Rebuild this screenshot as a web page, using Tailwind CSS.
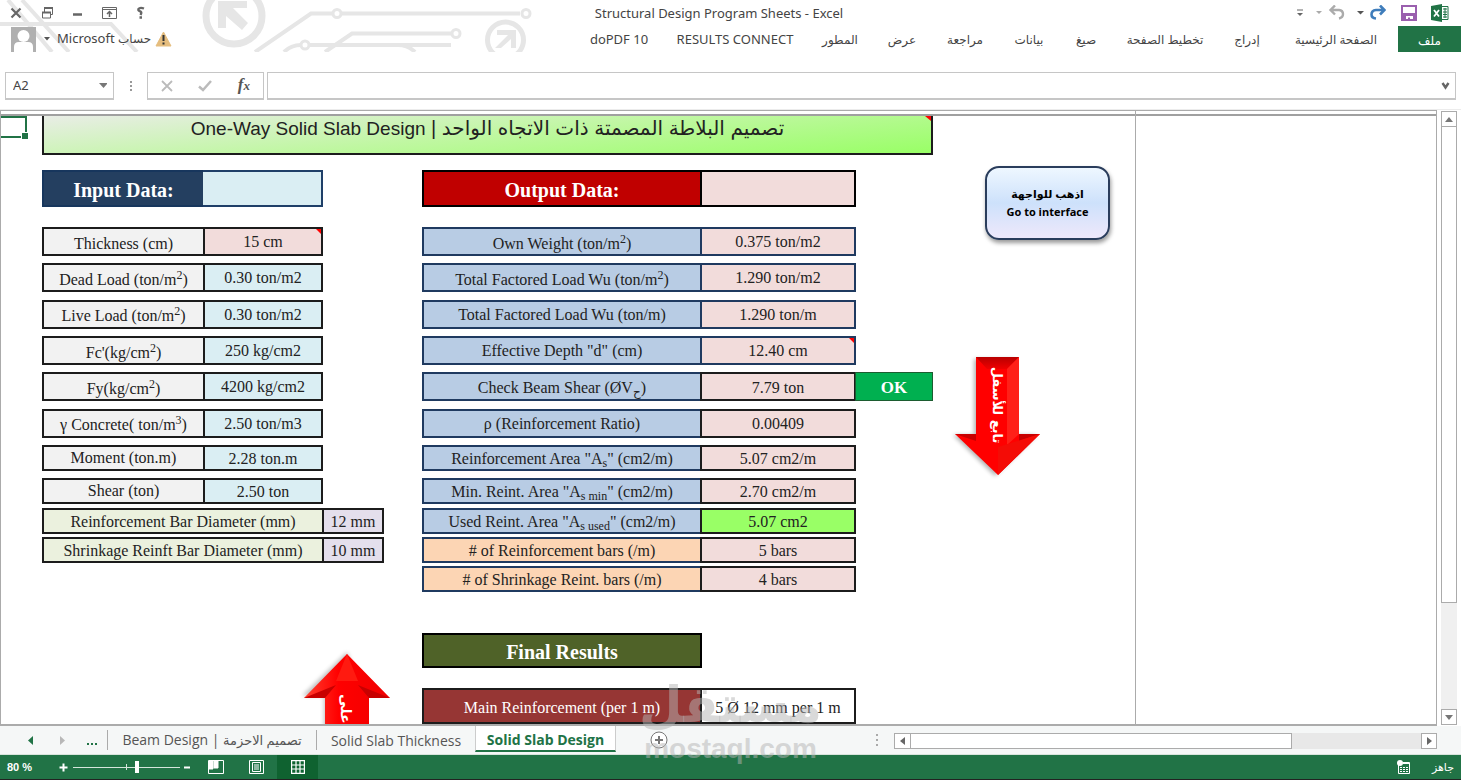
<!DOCTYPE html>
<html lang="ar">
<head>
<meta charset="utf-8">
<title>Structural Design Program Sheets - Excel</title>
<script src="https://cdn.jsdelivr.net/npm/@tailwindcss/browser@4"></script>
</head>
<body class="h-screen flex flex-col overflow-hidden bg-white text-[#444] font-['Noto_Sans','DejaVu_Sans',sans-serif] text-[13px]">

<header class="relative h-[52px] shrink-0">
  <svg class="absolute left-0 top-0" width="540" height="52" viewBox="0 0 540 52" fill="none" stroke="#e6e6e6" stroke-width="4" aria-hidden="true">
    <path d="M8 0 52 52M22 0 69 52M0 24H111L137 52"/>
    <circle cx="234" cy="16" r="28" stroke-width="7"/>
    <path d="M218 28V1H247V8H233L248 23 242 30 226 16V28Z" fill="#e6e6e6" stroke="none"/>
    <path d="M255 52 311 13.500H332M341 13.500H520M284 52Q291 45 301 45M310 45H451M325 52 352 33.500H451"/>
    <circle cx="337" cy="13.500" r="4" stroke-width="3" fill="#fff"/>
    <circle cx="305" cy="45" r="4" stroke-width="3" fill="#fff"/>
    <circle cx="526" cy="13.500" r="4" stroke-width="3" fill="#fff"/>
    <circle cx="456" cy="33.500" r="4" stroke-width="3" fill="#fff"/>
    <circle cx="505.500" cy="40" r="18" stroke-width="5"/>
    <path d="M497 30H516V48H511V39L501 48H495L508 35H497Z" fill="#e6e6e6" stroke="none"/>
    <path d="M398 45Q408 45 415 52"/>
  </svg>
  <div class="relative h-[26px] flex items-center justify-between">
    <div class="flex-1 flex items-center gap-[17px] pl-[9px]">
      <button aria-label="Close"><svg width="14" height="14" viewBox="0 0 14 14" fill="none" stroke="#666" stroke-width="2.200"><path d="M2.500 2.500 11.500 11.500M11.500 2.500 2.500 11.500"/></svg></button>
      <button aria-label="Restore"><svg width="14" height="14" viewBox="0 0 14 14" fill="none" stroke="#666"><path d="M4.500 6V2.500H12.500V8.500H10" /><path d="M4 2H13" stroke-width="2"/><path d="M2.500 6.500H10.500V12H2.500Z" fill="#fff"/><path d="M2 6.500H11" stroke-width="2"/></svg></button>
      <button aria-label="Minimize"><svg width="14" height="14" viewBox="0 0 14 14" stroke="#666" stroke-width="2.500"><path d="M2 8.500H11"/></svg></button>
      <button aria-label="Ribbon display options"><svg width="15" height="14" viewBox="0 0 15 14" fill="none" stroke="#666"><path d="M.5 1.500H14.500V12.500H.5ZM.5 3.500H14.500"/><path d="M7.500 11V6M5 8 7.500 5.500 10 8" stroke-width="1.500"/></svg></button>
      <button aria-label="Help"><svg width="14" height="14" viewBox="0 0 14 14" fill="none" stroke="#666" stroke-width="2.400"><path d="M10 2.500Q6 1 4.500 3 4 5 6.500 5.500 8 6.500 6.500 9M5.500 11.500H8"/></svg></button>
    </div>
    <h1 class="pr-[10px] -ml-[10px] pt-px">Structural Design Program Sheets - Excel</h1>
    <div class="flex-1 flex items-center justify-end pr-[12px]">
      <button aria-label="Customize" class="mr-[12px]"><svg width="8" height="8" viewBox="0 0 8 8"><path d="M1 1H7" stroke="#666"/><path d="M1 4H7L4 7Z" fill="#666"/></svg></button>
      <button aria-label="Undo list" class="mr-[6px]"><svg width="6" height="4"><path d="M0 0H6L3 3Z" fill="#aaa"/></svg></button>
      <button aria-label="Undo" class="mr-[12px]"><svg width="17" height="16" viewBox="0 0 17 16" fill="none" stroke="#ababab" stroke-width="2.400"><path d="M7 .5 2.500 5 7 9.500M3 5H11Q15 5.500 15 9 15 12.500 11 13.500"/></svg></button>
      <button aria-label="Redo list" class="mr-[6px]"><svg width="7" height="4"><path d="M0 0H7L3.500 3.500Z" fill="#555"/></svg></button>
      <button aria-label="Redo" class="mr-[15px]"><svg width="16" height="16" viewBox="0 0 16 16" fill="none" stroke="#3f7dbb" stroke-width="2.600"><path d="M10 .5 14.500 5 10 9.500M14 5H6Q1.500 5.500 1.500 9.500 1.500 13 6 13.500"/></svg></button>
      <button aria-label="Save" class="mr-[14px]"><svg width="16" height="16" viewBox="0 0 16 16" fill="none"><path d="M1 1H15V15H1Z" stroke="#9a5fae" stroke-width="2"/><path d="M2 8H14V15H12V11H5V15H2Z" fill="#9a5fae"/><path d="M7 12.500H9V15H7Z" fill="#9a5fae"/></svg></button>
      <svg width="18" height="18" viewBox="0 0 18 18" role="img" aria-label="Excel"><path d="M10 2.500H17V15.500H10Z" fill="#fff" stroke="#217346"/><path d="M12 5H16M12 8H16M12 10.500H16M12 13H16M14 4V14" stroke="#217346"/><path d="M0 2 11 0V18L0 16Z" fill="#217346"/><path d="M3 6 8 12.500M8 6 3 12.500" stroke="#fff" stroke-width="1.800"/></svg>
    </div>
  </div>
  <div class="relative h-[26px] flex items-center justify-between">
    <button class="flex items-center pl-[11px] h-full">
      <svg width="25" height="25" viewBox="0 0 25 25" aria-hidden="true"><path d="M0 0H25V25H0Z" fill="#b0b0b0"/><circle cx="12.500" cy="9" r="6" fill="#fff"/><path d="M3 25V20Q3 15 8 15H17Q22 15 22 20V25Z" fill="#fff"/></svg>
      <svg class="ml-[8px] mr-[7px]" width="6" height="4" aria-hidden="true"><path d="M0 0H6L3 3.500Z" fill="#555"/></svg>
      <span dir="ltr">Microsoft <bdi class="text-[12px]">حساب</bdi></span>
      <svg class="ml-1" width="17" height="16" viewBox="0 0 17 16" aria-hidden="true"><path d="M8.500 1 16 15H1Z" fill="#e5bd7e" stroke="#e5bd7e" stroke-linejoin="round"/><path d="M8.500 4V10M8.500 11.500V13.500" stroke="#333" stroke-width="2"/></svg>
    </button>
    <nav class="flex items-center h-full text-center whitespace-nowrap text-[12px] leading-[18px]">
      <a href="#" class="w-[86px] text-[13px]">doPDF 10</a>
      <a href="#" class="w-[146px] text-[13px]">RESULTS CONNECT</a>
      <a href="#" class="w-[64px] pt-[2px]">المطور</a>
      <a href="#" class="w-[60px] pt-[2px]">عرض</a>
      <a href="#" class="w-[66px] pt-[2px]">مراجعة</a>
      <a href="#" class="w-[62px] pt-[2px]">بيانات</a>
      <a href="#" class="w-[52px] pt-[2px]">صيغ</a>
      <a href="#" class="w-[106px] pt-[2px]">تخطيط الصفحة</a>
      <a href="#" class="w-[58px] pt-[2px]">إدراج</a>
      <a href="#" class="w-[120px] pt-[2px]">الصفحة الرئيسية</a>
      <a href="#" class="ml-[2px] w-[63px] h-full pt-[6px] bg-[#217346] text-white">ملف</a>
    </nav>
  </div>
</header>

<section class="mt-[20px] h-[28px] shrink-0 flex pl-[5px] pr-[5px]" aria-label="Formula bar">
  <label class="w-[109px] flex items-center border border-b-2 border-[#c6c6c6] pr-[6px]">
    <input aria-label="Name box" value="A2" class="w-full min-w-0 pl-[7px] pt-px outline-none text-[13px]">
    <svg width="9" height="6" aria-hidden="true"><path d="M0 0H9L4.500 5Z" fill="#777"/></svg>
  </label>
  <div class="w-[33px] flex flex-col items-center justify-center gap-[2px]" aria-hidden="true">
    <i class="size-[2px] bg-[#999]"></i><i class="size-[2px] bg-[#999]"></i><i class="size-[2px] bg-[#999]"></i>
  </div>
  <div class="w-[117px] flex items-center justify-between border border-b-2 border-[#c6c6c6] pl-[13px] pr-[13px]">
    <button aria-label="Cancel"><svg width="12" height="12" viewBox="0 0 12 12" stroke="#bbb" stroke-width="1.800"><path d="M1 1 11 11M11 1 1 11"/></svg></button>
    <button aria-label="Enter"><svg width="14" height="12" viewBox="0 0 14 12" fill="none" stroke="#bbb" stroke-width="2.500"><path d="M1 6.500 5 10 13 1"/></svg></button>
    <button aria-label="Insert function" class="font-['Liberation_Serif',serif] italic font-bold text-[17px] leading-4 text-[#555]">f<span class="text-[13px]">x</span></button>
  </div>
  <label class="ml-[3px] flex-1 flex items-center border border-b-2 border-[#c6c6c6] pr-[5px]">
    <input aria-label="Formula" class="flex-1 outline-none px-2">
    <svg width="9" height="8" viewBox="0 0 9 8" fill="none" stroke="#666" stroke-width="2.400" aria-hidden="true"><path d="M1.500 1 4.500 5.500 7.500 1"/></svg>
  </label>
</section>

<main class="mt-[9px] flex-1 min-h-0 flex border-t border-[#ececec]">
  <div class="relative flex-1 min-w-0 flex flex-col border-l border-r border-t border-b-2 border-[#ababab] overflow-hidden">
    <div class="h-[3px] shrink-0"></div>
    <div class="h-[2px] shrink-0 bg-[#a0a0a0]"></div>
    <div class="absolute left-0 top-[5px] w-[26px] h-[22px] border-2 border-[#217346] border-l-0"><i class="absolute -right-[3px] -bottom-[3px] size-[7px] bg-[#217346] border-t border-l border-white"></i></div>
    <div class="absolute inset-y-0 left-[1134px] w-px bg-[#ababab]"></div>

    <div class="flex pl-[41px] font-['Liberation_Serif',serif] text-[16px] leading-[22px] text-[#222]">
      <div class="w-[891px] shrink-0">
        <h2 dir="rtl" class="relative h-[39px] border-2 border-t-0 border-[#1c1c1c] bg-[linear-gradient(175deg,#e9ede6,#c0f7a2_50%,#99ff66)] text-center text-[20px] leading-6 font-['Liberation_Sans','DejaVu_Sans',sans-serif]">
          تصميم البلاطة المصمتة ذات الاتجاه الواحد | <bdi class="text-[19px]">One-Way Solid Slab Design</bdi>
          <svg class="absolute right-0 top-0" width="6" height="5" aria-hidden="true"><path d="M0 0H6V5Z" fill="#f00"/></svg>
        </h2>
        <div class="mt-[15px] flex gap-[38px]">
          <div class="w-[342px]">
            <table class="block">
              <thead class="block"><tr class="flex h-[37px]">
                <th class="w-[163px] flex items-center justify-center border-2 border-[#17365d] bg-[#243f60] pt-[2px] text-white text-[20px] font-bold">Input Data:</th>
                <td class="w-[120px] -ml-[2px] border-2 border-l-0 border-[#1f3f68] bg-[#daeef3]"></td>
              </tr></thead>
              <tbody class="block mt-[20px] text-center [&_td]:border-2 [&_th]:border-2 [&_td]:border-[#1c1c1c] [&_th]:border-[#1c1c1c] [&_td]:-ml-[2px] [&_th]:font-normal [&_sup]:text-[12px] [&_sup]:-top-[6px] [&_sup]:leading-none">
                <tr class="flex h-[29px]"><th class="w-[163px] bg-[#f2f2f2] pt-[4px]">Thickness (cm)</th><td class="relative w-[120px] bg-[#f2dcdb] pt-[2px]">15 cm<svg class="absolute right-0 top-0" width="5" height="5" aria-hidden="true"><path d="M0 0H5V5Z" fill="#f00"/></svg></td></tr>
                <tr class="flex h-[29px] mt-[7px]"><th class="w-[163px] bg-[#f2f2f2] pt-[4px]">Dead Load (ton/m<sup>2</sup>)</th><td class="w-[120px] bg-[#daeef3] pt-[2px]">0.30 ton/m2</td></tr>
                <tr class="flex h-[29px] mt-[8px]"><th class="w-[163px] bg-[#f2f2f2] pt-[3px]">Live Load (ton/m<sup>2</sup>)</th><td class="w-[120px] bg-[#daeef3] pt-[2px]">0.30 ton/m2</td></tr>
                <tr class="flex h-[29px] mt-[7px]"><th class="w-[163px] bg-[#f2f2f2] pt-[4px]">Fc'(kg/cm<sup>2</sup>)</th><td class="w-[120px] bg-[#daeef3] pt-[2px]">250 kg/cm2</td></tr>
                <tr class="flex h-[29px] mt-[7px]"><th class="w-[163px] bg-[#f2f2f2] pt-[4px]">Fy(kg/cm<sup>2</sup>)</th><td class="w-[120px] bg-[#daeef3] pt-[2px]">4200 kg/cm2</td></tr>
                <tr class="flex h-[29px] mt-[8px]"><th class="w-[163px] bg-[#f2f2f2] pt-[3px]">γ Concrete( ton/m<sup>3</sup>)</th><td class="w-[120px] bg-[#daeef3] pt-[2px]">2.50 ton/m3</td></tr>
                <tr class="flex h-[26px] mt-[7px]"><th class="w-[163px] bg-[#f2f2f2]">Moment (ton.m)</th><td class="w-[120px] bg-[#daeef3] pt-[1px]">2.28 ton.m</td></tr>
                <tr class="flex h-[26px] mt-[7px]"><th class="w-[163px] bg-[#f2f2f2]">Shear (ton)</th><td class="w-[120px] bg-[#daeef3] pt-[1px]">2.50 ton</td></tr>
                <tr class="flex h-[26px] mt-[4px]"><th class="w-[282px] bg-[#ebf1de] pt-[1px]">Reinforcement Bar Diameter (mm)</th><td class="w-[62px] bg-[#e4dfec] pt-[1px]">12 mm</td></tr>
                <tr class="flex h-[26px] mt-[3px]"><th class="w-[282px] bg-[#ebf1de] pt-[1px]">Shrinkage Reinft Bar Diameter (mm)</th><td class="w-[62px] bg-[#e4dfec] pt-[1px]">10 mm</td></tr>
              </tbody>
            </table>
            <svg class="mt-[88px] ml-[258px] overflow-visible" width="94" height="120" viewBox="0 0 94 120" role="img" aria-label="تابع للأعلى">
              <defs><linearGradient id="up" x1="0" x2="1"><stop offset="0" stop-color="#ff4030"/><stop offset=".4" stop-color="#ff0000"/><stop offset="1" stop-color="#f00000"/></linearGradient></defs>
              <path d="M46 3 1 47H23V130H64V47Z" fill="#000" opacity=".25" transform="translate(1 -2)" class="blur-[2px]"/>
              <path d="M47 3 90 47H69V130H25V47H4Z" fill="url(#up)"/>
              <path d="M47 3 58 30 36 30Z" fill="#ff1a10"/>
              <path d="M4 47 36 34 25 47ZM90 47 58 34 69 47Z" fill="#c80000"/>
              <text transform="translate(41 43) rotate(90)" direction="rtl" text-anchor="end" fill="#fff" font-size="14" font-weight="bold" font-family="DejaVu Sans, sans-serif">تابع للأعلى</text>
            </svg>
          </div>

          <div class="flex-1">
            <table class="block">
              <thead class="block"><tr class="flex h-[37px]">
                <th class="w-[280px] flex items-center justify-center border-2 border-black bg-[#c00000] pt-[2px] text-white text-[20px] font-bold">Output Data:</th>
                <td class="w-[156px] -ml-[2px] border-2 border-black bg-[#f2dcdb]"></td>
              </tr></thead>
              <tbody class="block mt-[20px] text-center [&_td]:border-2 [&_th]:border-2 [&_th]:border-[#1f3a60] [&_td]:-ml-[2px] [&_th]:font-normal [&_sup]:text-[12px] [&_sup]:-top-[6px] [&_sup]:leading-none [&_sub]:text-[12px] [&_sub]:leading-none">
                <tr class="flex h-[29px]"><th class="w-[280px] bg-[#b8cce4] pt-[4px]">Own Weight (ton/m<sup>2</sup>)</th><td class="w-[156px] border-[#1f3a60] bg-[#f2dcdb] pt-[2px]">0.375 ton/m2</td></tr>
                <tr class="flex h-[29px] mt-[7px]"><th class="w-[280px] bg-[#b8cce4] pt-[4px]">Total Factored Load Wu (ton/m<sup>2</sup>)</th><td class="w-[156px] border-[#1f3a60] bg-[#f2dcdb] pt-[2px]">1.290 ton/m2</td></tr>
                <tr class="flex h-[29px] mt-[8px]"><th class="w-[280px] bg-[#b8cce4] pt-[2px]">Total Factored Load Wu (ton/m)</th><td class="w-[156px] border-[#1f3a60] bg-[#f2dcdb] pt-[2px]">1.290 ton/m</td></tr>
                <tr class="flex h-[29px] mt-[7px]"><th class="w-[280px] bg-[#b8cce4] pt-[2px]">Effective Depth "d" (cm)</th><td class="relative w-[156px] border-[#1f3a60] bg-[#f2dcdb] pt-[2px]">12.40 cm<svg class="absolute right-0 top-0" width="5" height="5" aria-hidden="true"><path d="M0 0H5V5Z" fill="#f00"/></svg></td></tr>
                <tr class="flex h-[29px] mt-[7px]"><th class="w-[280px] bg-[#b8cce4] pt-[3px]">Check Beam Shear (ØV<sub>ح</sub>)</th><td class="w-[156px] border-[#1c1c1c] bg-[#f2dcdb] pt-[3px]">7.79 ton</td><td class="w-[78px] ml-[-1px]! border-1! border-[#1c5c30] bg-[#00b050] text-white font-bold text-[17px] pt-[4px]">OK</td></tr>
                <tr class="flex h-[29px] mt-[8px]"><th class="w-[280px] bg-[#b8cce4] pt-[2px]">ρ (Reinforcement Ratio)</th><td class="w-[156px] border-[#1c1c1c] bg-[#f2dcdb] pt-[2px]">0.00409</td></tr>
                <tr class="flex h-[26px] mt-[7px]"><th class="w-[280px] bg-[#b8cce4] pt-[1px]">Reinforcement Area "A<sub>s</sub>" (cm2/m)</th><td class="w-[156px] border-[#1c1c1c] bg-[#f2dcdb] pt-[1px]">5.07 cm2/m</td></tr>
                <tr class="flex h-[26px] mt-[7px]"><th class="w-[280px] bg-[#b8cce4] pt-[1px]">Min. Reint. Area "A<sub>s min</sub>" (cm2/m)</th><td class="w-[156px] border-[#1c1c1c] bg-[#f2dcdb] pt-[1px]">2.70 cm2/m</td></tr>
                <tr class="flex h-[26px] mt-[4px]"><th class="w-[280px] bg-[#b8cce4] pt-[1px]">Used Reint. Area "A<sub>s used</sub>" (cm2/m)</th><td class="w-[156px] border-[#1c1c1c] bg-[#99ff66] pt-[1px]">5.07 cm2</td></tr>
                <tr class="flex h-[26px] mt-[3px]"><th class="w-[280px] bg-[#fcd5b4] pt-[1px]"># of Reinforcement bars (/m)</th><td class="w-[156px] border-[#1c1c1c] bg-[#f2dcdb] pt-[1px]">5 bars</td></tr>
                <tr class="flex h-[26px] mt-[3px]"><th class="w-[280px] bg-[#fcd5b4] pt-[1px]"># of Shrinkage Reint. bars (/m)</th><td class="w-[156px] border-[#1c1c1c] bg-[#f2dcdb] pt-[1px]">4 bars</td></tr>
              </tbody>
            </table>
            <table class="block mt-[41px]">
              <thead class="block"><tr class="flex h-[35px]"><th class="w-[280px] flex items-center justify-center border-2 border-black bg-[#4f6228] pt-[2px] text-white text-[20px] font-bold">Final Results</th></tr></thead>
              <tbody class="block mt-[20px]"><tr class="flex h-[36px] text-center">
                <th class="w-[280px] border-2 border-[#1c1c1c] bg-[#963634] text-white font-normal pt-[7px]">Main Reinforcement (per 1 m)</th>
                <td class="w-[156px] -ml-[2px] border-2 border-[#1c1c1c] pt-[7px]">5 Ø 12 mm per 1 m</td>
              </tr></tbody>
            </table>
          </div>
        </div>
      </div>

      <div class="flex flex-col items-start pt-[50px]">
        <button class="ml-[52px] w-[125px] h-[74px] rounded-[14px] border-2 border-[#2a3d5c] bg-linear-to-b from-[#eef7ff] via-[#cde1fb] to-[#eee8fb] shadow-[1px_3px_4px_rgba(0,0,0,0.4)] font-['Open_Sans','DejaVu_Sans',sans-serif] font-bold text-[11px] leading-[18px] text-black whitespace-nowrap">اذهب للواجهة<br>Go to interface</button>
        <svg class="mt-[115px] ml-[18px] overflow-visible" width="94" height="126" viewBox="0 0 94 126" role="img" aria-label="تابع للأسفل">
          <defs><linearGradient id="cap" x1="0" x2="0" y1="0" y2="1"><stop offset="0" stop-color="#b80000"/><stop offset="1" stop-color="#f00000"/></linearGradient></defs>
          <path d="M23 4H63V80H86L44 121 2 80H23Z" fill="#000" opacity=".3" class="blur-[2px]"/>
          <path d="M25 2H68V79H89L47 120 4 79H25Z" fill="#ff0000"/>
          <path d="M25 2H68L56 14H36Z" fill="url(#cap)"/>
          <path d="M68 2V79L56 90V14Z" fill="#ff2018"/>
          <path d="M4 79H25V86ZM68 79H89L68 86Z" fill="#c80000"/>
          <path d="M47 92 47 120 89 79Z" fill="#f40c06"/>
          <text transform="translate(42 50) rotate(90)" direction="rtl" text-anchor="middle" fill="#fff" font-size="13" font-weight="bold" font-family="DejaVu Sans, sans-serif">تابع للأسفل</text>
        </svg>
      </div>
    </div>
  </div>

  <div class="w-[24px] shrink-0 flex flex-col items-center bg-white pt-[1px]">
    <button aria-label="Scroll up" class="w-[16px] h-[16px] shrink-0 flex items-center justify-center border border-[#ababab]"><svg width="8" height="5"><path d="M0 5H8L4 0Z" fill="#777"/></svg></button>
    <div class="w-[16px] flex-1 bg-[#f0f0f0]"><div class="-mt-px h-[82%] border border-[#ababab] bg-white"></div></div>
    <button aria-label="Scroll down" class="w-[16px] h-[16px] mb-[1px] shrink-0 flex items-center justify-center border border-[#ababab]"><svg width="8" height="5"><path d="M0 0H8L4 5Z" fill="#777"/></svg></button>
  </div>
</main>

<nav class="h-[28px] shrink-0 flex items-stretch bg-[#f5f7f7] text-[14px] text-[#555] whitespace-nowrap" aria-label="Sheets">
  <div class="w-[108px] my-[4px] flex items-center border-r border-[#ababab] pl-[28px]">
    <button aria-label="Previous sheet"><svg width="6" height="9"><path d="M5 0V9L0 4.500Z" fill="#217346"/></svg></button>
    <button aria-label="Next sheet" class="ml-[26px]"><svg width="6" height="9"><path d="M0 0V9L5 4.500Z" fill="#b8b8b8"/></svg></button>
    <button aria-label="More sheets" class="ml-[21px] flex gap-[2px] pt-[7px]"><i class="size-[2px] bg-[#217346]"></i><i class="size-[2px] bg-[#217346]"></i><i class="size-[2px] bg-[#217346]"></i></button>
  </div>
  <a href="#" class="w-[209px] my-[4px] flex items-center justify-center border-r border-[#ababab] font-['Open_Sans','DejaVu_Sans',sans-serif]"><span dir="ltr">Beam Design | <bdi class="text-[13px]">تصميم الاحزمة</bdi></span></a>
  <a href="#" class="w-[158px] flex items-center justify-center font-['Open_Sans',sans-serif]">Solid Slab Thickness</a>
  <a href="#" aria-current="page" class="w-[141px] h-[26px] pt-[2px] flex items-center justify-center border-b-2 border-x border-b-[#217346] border-x-[#ccc] bg-white text-[#217346] font-bold text-[14px] font-['Open_Sans',sans-serif]">Solid Slab Design</a>
  <button aria-label="New sheet" class="ml-[34px]"><svg width="18" height="18" viewBox="0 0 18 18" fill="none" stroke="#777"><circle cx="9" cy="9" r="8" fill="#fff"/><path d="M9 5V13M5 9H13" stroke-width="2"/></svg></button>
  <div class="flex-1"></div>
  <div class="flex flex-col justify-center gap-[3px] mr-[16px]" aria-hidden="true"><i class="size-[2px] bg-[#aaa]"></i><i class="size-[2px] bg-[#aaa]"></i><i class="size-[2px] bg-[#aaa]"></i></div>
  <div class="w-[543px] h-[16px] mt-[7px] mr-[24px] flex bg-[#e8e8e8]">
    <button aria-label="Scroll left" class="w-[17px] bg-white border border-[#ababab] flex items-center justify-center"><svg width="5" height="8"><path d="M5 0V8L0 4Z" fill="#666"/></svg></button>
    <div class="-ml-px w-[382px] bg-white border border-[#ababab]"></div>
    <button aria-label="Scroll right" class="ml-auto w-[16px] bg-white border border-[#ababab] flex items-center justify-center"><svg width="5" height="8"><path d="M0 0V8L5 4Z" fill="#666"/></svg></button>
  </div>
</nav>

<footer class="h-[26px] shrink-0 flex items-center bg-[#217346] border-t border-t-[#d8e4dc] border-b border-b-[#222] text-white text-[11px] whitespace-nowrap">
  <span class="w-[59px] pl-[7px] font-['Liberation_Sans',sans-serif] font-bold">80 %</span>
  <button aria-label="Zoom in" class="w-[10px]"><svg width="9" height="9" stroke="#fff" stroke-width="2"><path d="M4.500 .5V8.500M.5 4.500H8.500"/></svg></button>
  <div class="relative ml-[4px] w-[107px] h-full flex items-center">
    <input type="range" dir="rtl" min="0" max="100" value="40" aria-label="Zoom" class="appearance-none w-full h-px bg-[#d5e5db] [&::-webkit-slider-thumb]:appearance-none [&::-webkit-slider-thumb]:w-[4px] [&::-webkit-slider-thumb]:h-[12px] [&::-webkit-slider-thumb]:bg-white">
    <i class="absolute left-[53px] top-[9px] w-px h-[6px] bg-[#d5e5db]"></i>
  </div>
  <button aria-label="Zoom out" class="ml-[4px] w-[24px]"><svg width="7" height="9" stroke="#fff" stroke-width="2"><path d="M0 4.500H6"/></svg></button>
  <button aria-label="Page break preview"><svg width="16" height="14" viewBox="0 0 16 14" fill="none" stroke="#fff"><path d="M.5 .5H15.500V13.500H.5Z"/><path d="M1 1H5V9H1ZM6 1H10V8H6Z" fill="#fff"/></svg></button>
  <button aria-label="Page layout" class="ml-[25px]"><svg width="15" height="14" viewBox="0 0 15 14" fill="none" stroke="#fff"><path d="M.5 .5H14.500V13.500H.5ZM3.500 2.500H11.500V11.500H3.500ZM5 5H10M5 7H10M5 9H10"/></svg></button>
  <button aria-label="Normal view" class="ml-[13px] w-[41px] h-full flex items-center justify-center bg-[#0f6230]"><svg width="14" height="14" viewBox="0 0 14 14" fill="none" stroke="#fff" stroke-width="1.200"><path d="M.6 .6H13.400V13.400H.6ZM5 .6V13.400M9 .6V13.400M.6 5H13.400M.6 9H13.400"/></svg></button>
  <div class="flex-1"></div>
  <button aria-label="Record macro" class="mr-[22px]"><svg width="13" height="14" viewBox="0 0 13 14" fill="none" stroke="#fff"><path d="M1.500 5V13.500H12.500V2.500H6"/><path d="M6 3H12" stroke-width="2"/><path d="M3 7.500H11M3 9.500H11M3 11.500H11" stroke-dasharray="2 1"/><circle cx="3" cy="3" r="3" fill="#fff" stroke="none"/></svg></button>
  <span class="pr-[7px]">جاهز</span>
</footer>

<div class="absolute left-[642px] top-[676px] w-[177px] flex flex-col items-center font-bold text-[#b4b4b4]/50 pointer-events-none whitespace-nowrap">
  <div class="h-[58px] text-[50px] leading-[58px] font-['DejaVu_Sans',sans-serif]">مستقل</div>
  <div class="text-[28px] leading-[30px] font-['Liberation_Sans',sans-serif]">mostaql.com</div>
</div>
</body>
</html>
